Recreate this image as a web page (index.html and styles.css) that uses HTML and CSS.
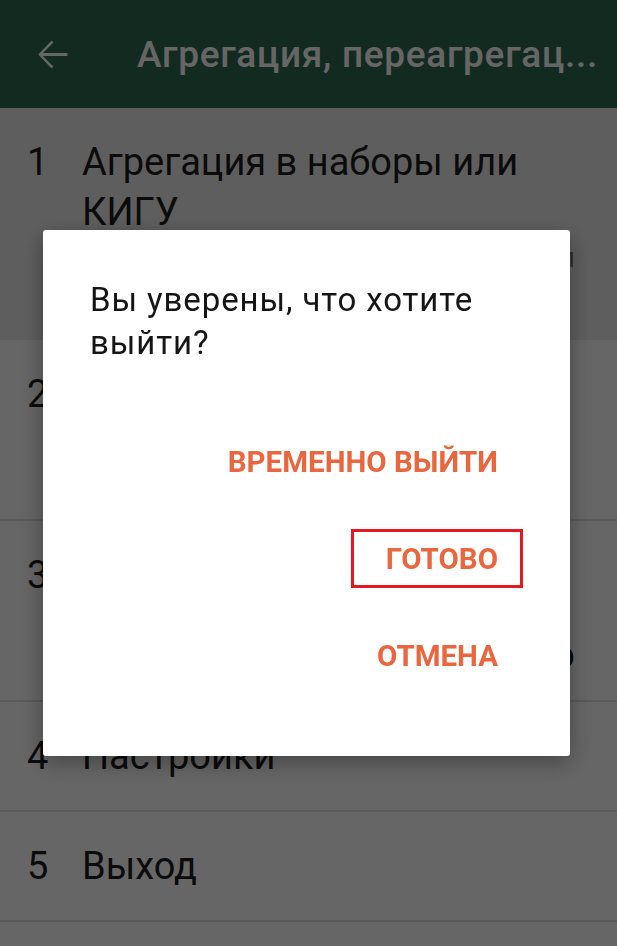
FILE: index.html
```html
<!DOCTYPE html>
<html lang="ru">
<head>
    <meta charset="UTF-8">
    <meta name="viewport" content="width=device-width, initial-scale=1.0">
    <title>Агрегация</title>
    <link rel="stylesheet" href="styles.css">
</head>
<body>
    <div class="appbar">
        <svg class="back" viewBox="0 0 24 24" width="45" height="45">
            <path d="M20 11.2H6.9l5.6-5.6-1-1L4.4 12l7.1 7.4 1-1-5.6-5.6H20z" fill="#fff"/>
        </svg>
        <div class="title">Агрегация, переагрегац...</div>
    </div>

    <ul class="menu">
        <li class="row active">
            <span class="num">1</span>
            <div class="body">
                <div class="name">Агрегация в наборы или КИГУ</div>
                <div class="hint">Сборка товаров в наборы и комплекты для продажи</div>
            </div>
        </li>
        <li class="row tall">
            <span class="num">2</span>
            <div class="body">
                <div class="name">Переагрегация</div>
            </div>
        </li>
        <li class="row tall">
            <span class="num">3</span>
            <div class="body">
                <div class="name">Расформирование</div>
                <div class="extra">наборов и КИГУ полностью или частично</div>
            </div>
        </li>
        <li class="row">
            <span class="num">4</span>
            <div class="body">
                <div class="name">Настройки</div>
            </div>
        </li>
        <li class="row">
            <span class="num">5</span>
            <div class="body">
                <div class="name">Выход</div>
            </div>
        </li>
        <li class="row last"></li>
    </ul>

    <!-- диалог выхода поверх затемнения -->
    <div class="scrim">
        <div class="dialog">
            <p class="message">Вы уверены, что хотите выйти?</p>
            <div class="actions">
                <button class="btn">ВРЕМЕННО ВЫЙТИ</button>
                <button class="btn marked">ГОТОВО</button>
                <button class="btn">ОТМЕНА</button>
            </div>
        </div>
    </div>
</body>
</html>
```

FILE: styles.css
```css
html,body{margin:0;padding:0}
body{
    width:617px;
    height:946px;
    overflow:hidden;
    background:#fff;
    font-family:Roboto,"Noto Sans",sans-serif;
    color:#1c1c1c;
}

.appbar{
    height:108px;
    background:#2f6a50;
    display:flex;
    align-items:center;
}
.back{margin-left:30px;flex:none}
.title{
    margin-left:62px;
    font-size:37px;
    letter-spacing:.7px;
    font-weight:500;
    color:#fff;
    white-space:nowrap;
}

.menu{list-style:none;margin:0;padding:0}
.row{
    display:flex;
    align-items:center;
    min-height:108px;
    border-bottom:2px solid #e0e0e0;
    font-size:38px;
    line-height:50px;
}
.row.last{min-height:24px}
.row.tall{align-items:flex-start;min-height:150px;padding-top:29px}
.row.active{
    align-items:flex-start;
    min-height:203px;
    padding-top:29px;
    background:#ececec;
    border-bottom:none;
}
.num{width:55px;padding-left:27px;flex:none}
.body{flex:1;padding-right:42px;min-width:0}
.name{white-space:nowrap}
.active .name{white-space:normal}
.hint{
    font-size:28px;
    line-height:34px;
    margin-top:4px;
    color:#777;
    white-space:nowrap;
    direction:rtl;
    overflow:hidden;
}
.extra{
    margin-top:30px;
    white-space:nowrap;
    direction:rtl;
    overflow:hidden;
}

/* затемнение */
.scrim{
    position:fixed;
    left:0;top:0;right:0;bottom:0;
    background:rgba(0,0,0,.6);
}
.dialog{
    position:absolute;
    left:43px;top:230px;
    width:527px;
    height:526px;
    box-sizing:border-box;
    padding:48px 60px 0 47px;
    background:#fff;
    border-radius:3px;
    box-shadow:0 6px 24px rgba(0,0,0,.35);
}
.message{
    margin:0;
    font-size:33px;
    letter-spacing:.9px;
    line-height:43px;
    color:#151515;
}
.actions{
    margin-top:70px;
    padding-right:12px;
    display:flex;
    flex-direction:column;
    align-items:flex-end;
    gap:41px;
}
.btn{
    position:relative;
    height:56px;
    padding:0;
    border:none;
    background:none;
    font-family:Roboto,"Noto Sans",sans-serif;
    font-size:29.5px;
    font-weight:700;
    color:#e9663f;
}
.marked::after{
    content:"";
    position:absolute;
    left:-35px;right:-25px;top:-2px;bottom:-1px;
    border:3px solid #e5171f;
}
```
